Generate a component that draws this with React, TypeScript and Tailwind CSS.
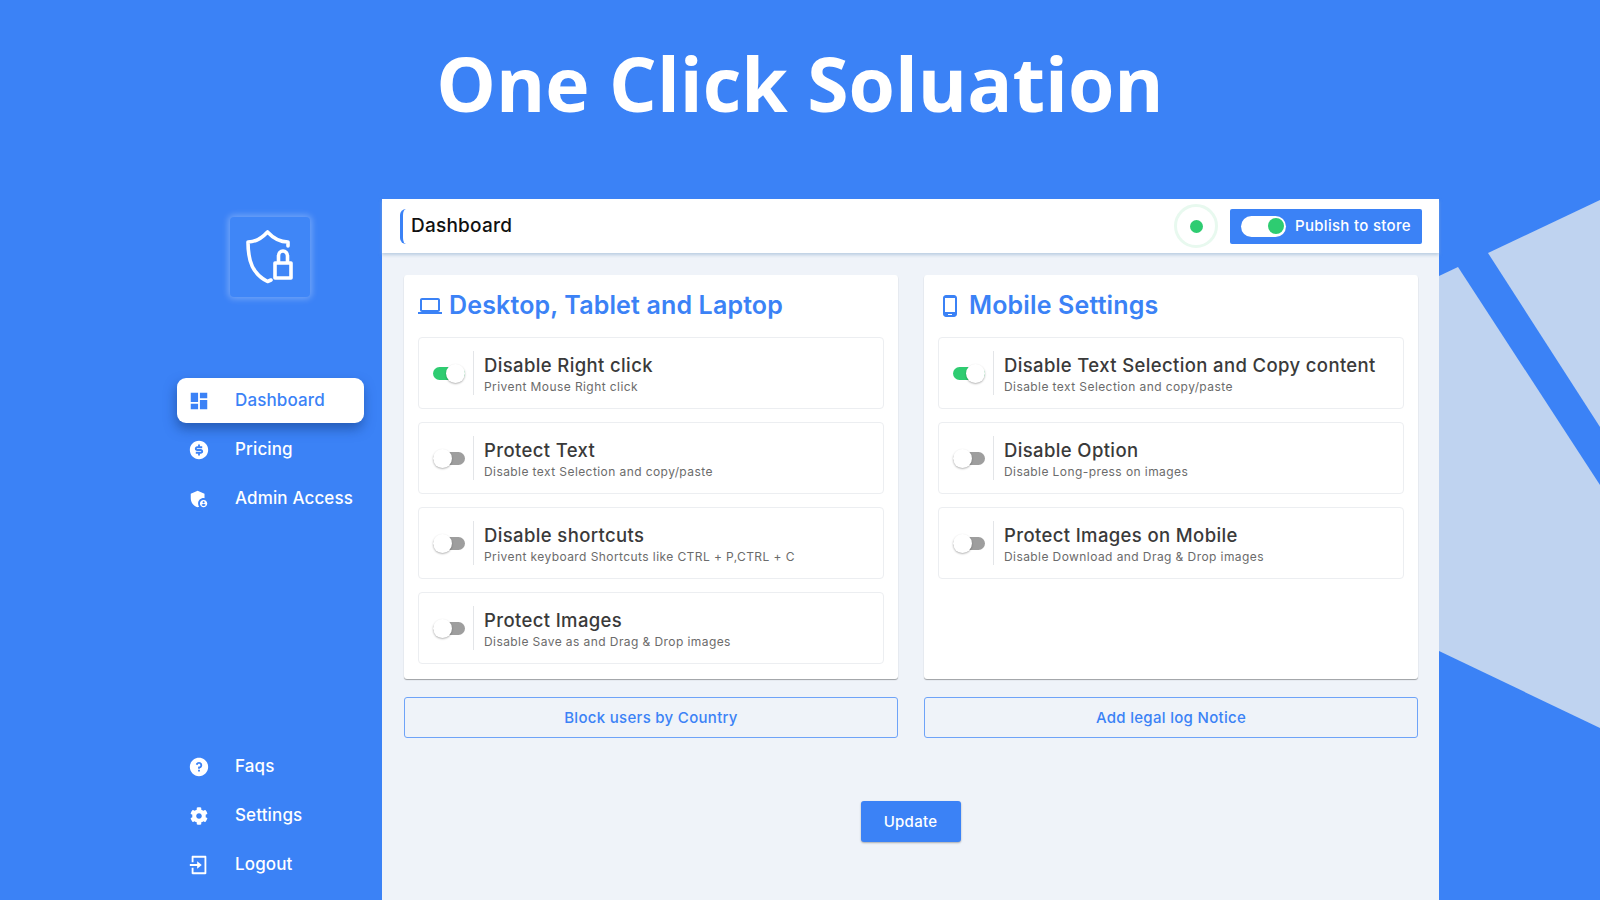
import type { ReactNode } from "react";
import { MdDashboard, MdLaptop, MdOutlinePhoneAndroid, MdAdminPanelSettings } from "react-icons/md";
import { RiMoneyDollarCircleFill, RiQuestionFill, RiLoginBoxLine } from "react-icons/ri";
import { FaCog } from "react-icons/fa";

const desktopRows = [
  { title: "Disable Right click", sub: "Privent Mouse Right click", on: true },
  { title: "Protect Text", sub: "Disable text Selection and copy/paste", on: false },
  { title: "Disable shortcuts", sub: "Privent keyboard Shortcuts like CTRL + P,CTRL + C", on: false },
  { title: "Protect Images", sub: "Disable Save as and Drag & Drop images", on: false },
];

const mobileRows = [
  { title: "Disable Text Selection and Copy content", sub: "Disable text Selection and copy/paste", on: true },
  { title: "Disable Option", sub: "Disable Long-press on images", on: false },
  { title: "Protect Images on Mobile", sub: "Disable Download and Drag & Drop images", on: false },
];

function Toggle({ on }: { on: boolean }) {
  return (
    <div className={`flex h-[13px] w-[32px] items-center rounded-full ${on ? "justify-end bg-[#2ecc71]" : "justify-start bg-[#9e9e9e]"}`}>
      <div className="h-[19px] w-[19px] rounded-full bg-white shadow-[0_1px_2px_rgba(0,0,0,0.3)]" />
    </div>
  );
}

function SettingRow({ title, sub, on }: { title: string; sub: string; on: boolean }) {
  return (
    <div className="flex h-[72px] items-center rounded-[4px] border border-[#eceef1] bg-white pl-[14px]">
      <Toggle on={on} />
      <div className="ml-[8px] h-[44px] w-px bg-[#e3e5e8]" />
      <div className="ml-[10px] flex flex-col">
        <span className="text-[18.5px] leading-[24px] font-medium tracking-[0.02em] text-[#3a3a3a]">{title}</span>
        <span className="mt-[2px] text-[12px] leading-[15px] tracking-[0.035em] text-[#6b6b6b]">{sub}</span>
      </div>
    </div>
  );
}

function SettingsCard({ icon, title, rows }: { icon: ReactNode; title: string; rows: typeof desktopRows }) {
  return (
    <div className="flex h-[404px] flex-col rounded-[3px] bg-white px-[14px] shadow-[0_1px_1px_rgba(0,0,0,0.35)]">
      <div className="flex h-[62px] items-center gap-[7px] text-[#3b82f6]">
        {icon}
        <h2 className="text-[25px] font-semibold tracking-[0.006em]">{title}</h2>
      </div>
      <div className="flex flex-col gap-[13px]">
        {rows.map((row) => (
          <SettingRow key={row.title} {...row} />
        ))}
      </div>
    </div>
  );
}

function NavItem({ icon, label, active }: { icon: ReactNode; label: string; active?: boolean }) {
  return (
    <div
      className={`flex h-[45px] w-[187px] items-center gap-[27px] rounded-[9px] pl-[13px] text-[17px] font-medium tracking-[0.008em] ${
        active ? "bg-white text-[#3b82f6] shadow-[-1px_6px_12px_rgba(20,60,130,0.55)]" : "text-white"
      }`}
    >
      {icon}
      <span>{label}</span>
    </div>
  );
}

function ShieldLogo() {
  return (
    <svg viewBox="22 18 49 54" className="h-[54px] w-[49px]" fill="none" stroke="white" strokeWidth="3.6" strokeLinejoin="round" strokeLinecap="round">
      <path d="M64 34 V30 C56 30 49 26 43.5 20 C38 26 32 30 24 30 C24 50 29 62 43.5 69.5 L47 68" />
      <rect x="51" y="51" width="16" height="15" />
      <path d="M54.5 50 V44 a4.5 5 0 0 1 9 0 V50" />
    </svg>
  );
}

export default function App() {
  return (
    <div className="relative h-[900px] w-[1600px] overflow-hidden bg-[#3b82f6] font-['Inter',sans-serif]">
      {/* background shapes */}
      <svg className="absolute inset-0" width="1600" height="900" viewBox="0 0 1600 900">
        <polygon points="1488,253 1600,200 1600,427" fill="#bfd3f0" />
        <polygon points="1439,276 1458,267 1600,485 1600,728 1439,651" fill="#bfd3f0" />
      </svg>

      <div className="relative flex h-full flex-col">
        <h1 className="flex h-[199px] items-start justify-center pt-[33px] font-['Open_Sans',sans-serif] text-[75px] leading-[100px] font-bold text-white">
          One Click Soluation
        </h1>

        <div className="flex h-[701px]">
          <aside className="flex w-[382px] flex-col pb-[13px] pl-[177px]">
            <div className="mt-[18px] ml-[53px] flex h-[80px] w-[80px] items-center justify-center rounded-[4px] bg-[#3f86f7] shadow-[0_0_6px_2px_rgba(255,255,255,0.28)]">
              <ShieldLogo />
            </div>
            <nav className="mt-[81px] flex flex-col gap-[4px]">
              <NavItem active label="Dashboard" icon={<MdDashboard size={22} className="-mx-[2px]" />} />
              <NavItem label="Pricing" icon={<RiMoneyDollarCircleFill size={22} className="-mx-[2px]" />} />
              <NavItem label="Admin Access" icon={<MdAdminPanelSettings size={22} className="-mx-[2px]" />} />
            </nav>
            <nav className="mt-auto flex flex-col gap-[4px]">
              <NavItem label="Faqs" icon={<RiQuestionFill size={22} className="-mx-[2px]" />} />
              <NavItem label="Settings" icon={<FaCog size={18} />} />
              <NavItem label="Logout" icon={<RiLoginBoxLine size={22} className="-mx-[2px]" />} />
            </nav>
          </aside>

          <main className="w-[1057px] bg-[#eff3f9]">
            <header className="flex h-[54px] items-center bg-white pr-[17px] pl-[18px] shadow-[0_2px_3px_rgba(150,180,210,0.6)]">
              <div className="h-[35px] w-[6px] rounded-l-[6px] border-l-[3px] border-[#3b82f6]" />
              <span className="ml-[5px] text-[19px] font-medium tracking-[0.012em] text-[#111111]">Dashboard</span>
              <div className="mr-[12px] ml-auto flex h-[44px] w-[44px] items-center justify-center rounded-full border-[3px] border-[#e8f9ef]">
                <div className="h-[13px] w-[13px] rounded-full bg-[#2ecc71]" />
              </div>
              <div className="flex h-[35px] w-[192px] items-center rounded-[2px] bg-[#3b82f6] pl-[11px]">
                <div className="flex h-[21px] w-[45px] items-center justify-end rounded-full bg-white pr-[2px]">
                  <div className="h-[16px] w-[16px] rounded-full bg-[#2ecc71]" />
                </div>
                <span className="ml-[9px] text-[15px] font-medium tracking-[0.02em] text-white">Publish to store</span>
              </div>
            </header>

            <div className="grid grid-cols-2 gap-x-[26px] gap-y-[18px] pt-[22px] pr-[21px] pl-[22px]">
              <SettingsCard icon={<MdLaptop size={24} />} title="Desktop, Tablet and Laptop" rows={desktopRows} />
              <SettingsCard icon={<MdOutlinePhoneAndroid size={24} />} title="Mobile Settings" rows={mobileRows} />
              <button className="h-[41px] rounded-[3px] border-[1.5px] border-[#6ea3f8] pt-[1px] text-[15px] font-medium tracking-[0.02em] text-[#3b82f6]">
                Block users by Country
              </button>
              <button className="h-[41px] rounded-[3px] border-[1.5px] border-[#6ea3f8] pt-[1px] text-[15px] font-medium tracking-[0.02em] text-[#3b82f6]">
                Add legal log Notice
              </button>
            </div>

            <div className="mt-[63px] flex justify-center">
              <button className="h-[41px] w-[100px] rounded-[3px] bg-[#3b82f6] pt-[1px] text-[15px] font-medium tracking-[0.02em] text-white shadow-[0_1px_2px_rgba(0,0,0,0.3)]">
                Update
              </button>
            </div>
          </main>
        </div>
      </div>
    </div>
  );
}
